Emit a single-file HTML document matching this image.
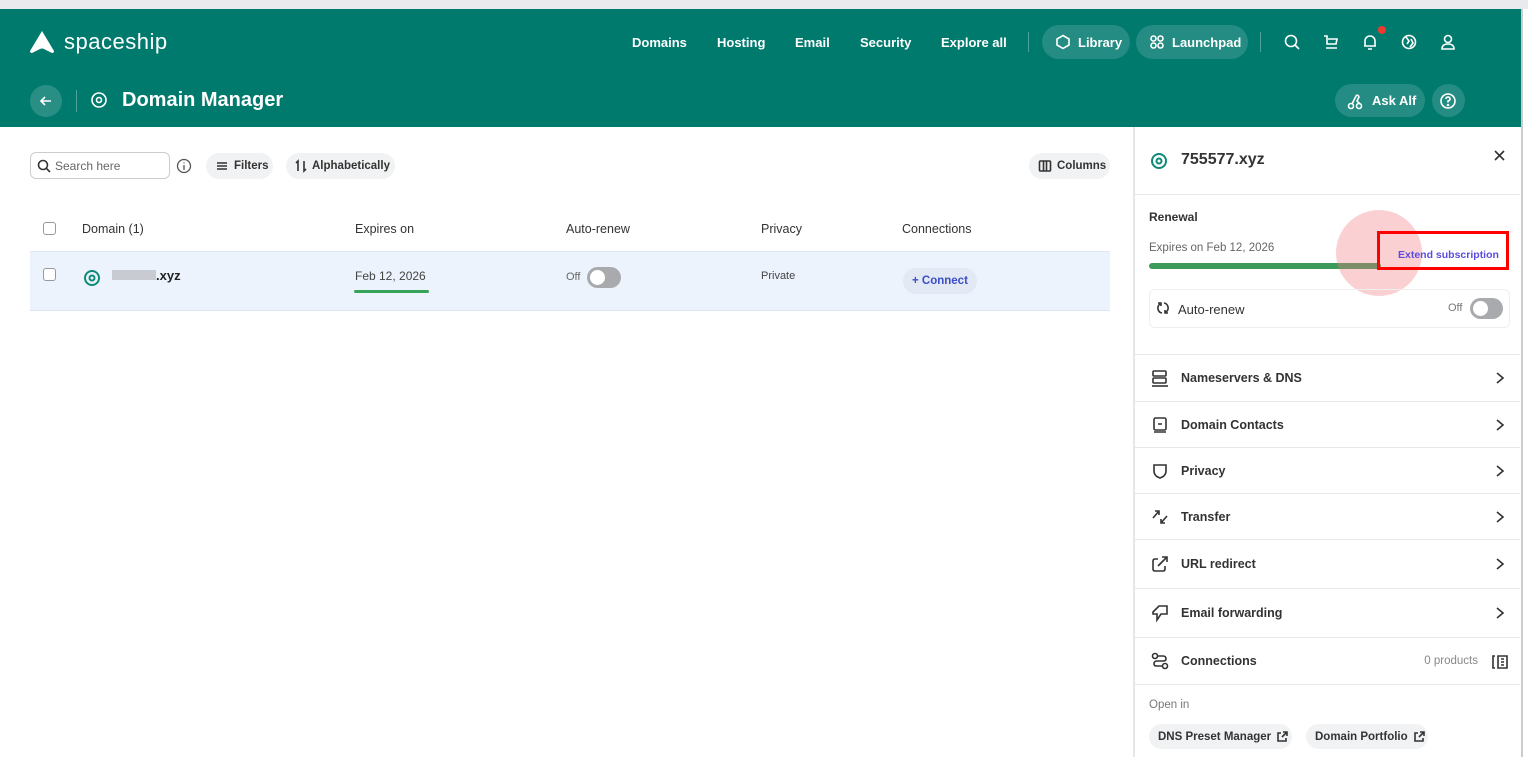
<!DOCTYPE html>
<html><head><meta charset="utf-8"><style>
*{box-sizing:border-box;margin:0;padding:0}
body{width:1528px;height:757px;overflow:hidden;background:#fff;font-family:"Liberation Sans",Arial,sans-serif;color:#222;position:relative}
.abs{position:absolute}
svg{flex-shrink:0;overflow:visible}
.top{left:0;top:0;width:1528px;height:9px;background:#e9eaee}
.hdr{left:0;top:9px;width:1528px;height:118px;background:#017a6e}
.nav{color:#fff;font-weight:bold;font-size:13px;top:35px}
.pill{background:rgba(255,255,255,.14);border-radius:17px;height:34px;top:25px;color:#fff;font-weight:bold;font-size:13px;display:flex;align-items:center;gap:7px;padding:0 13px;white-space:nowrap}
.ic{stroke:#fff;fill:none;stroke-width:1.6}
.btn{background:#f1f2f3;border-radius:13px;height:26px;font-size:11.5px;font-weight:bold;display:flex;align-items:center;gap:5px;padding:0 9px;color:#333;white-space:nowrap}
.th{font-size:12.5px;color:#333;top:222px}
.cb{width:13px;height:13px;border:1px solid #999;border-radius:3px;background:#fff}
.row{left:1135px;width:385px;height:47px;border-top:1px solid #e8e8e8;display:flex;align-items:center;padding-left:16px;font-size:12.5px;font-weight:bold;color:#333}
.row>svg:first-child{margin-right:12px}
.chev{position:absolute;right:14px;top:50%;margin-top:-7px}
.sc{fill:none;stroke:#333;stroke-width:1.6}
</style></head><body>
<div class="abs top"></div>
<div class="abs hdr"></div>
<svg class="abs" style="left:29px;top:30px" width="26" height="24" viewBox="0 0 26 24"><path d="M13 1 L25 21 Q25 23 23 23 L15 19 Q13 18 11 19 L3 23 Q1 23 1 21 Z" fill="#fff"/></svg>
<div class="abs" style="left:64px;top:29px;color:#fff;font-size:22px;letter-spacing:.5px">spaceship</div>
<div class="abs nav" style="left:632px">Domains</div>
<div class="abs nav" style="left:717px">Hosting</div>
<div class="abs nav" style="left:795px">Email</div>
<div class="abs nav" style="left:860px">Security</div>
<div class="abs nav" style="left:941px">Explore all</div>
<div class="abs" style="left:1028px;top:32px;width:1px;height:20px;background:rgba(255,255,255,.3)"></div>
<div class="abs pill" style="left:1042px;width:88px"><svg width="16" height="16" viewBox="0 0 16 16" class="ic"><path d="M8 1.5 L14 5 V11 L8 14.5 L2 11 V5 Z"/></svg>Library</div>
<div class="abs pill" style="left:1136px;width:112px"><svg width="16" height="16" viewBox="0 0 16 16" class="ic"><circle cx="4.5" cy="4.5" r="2.5"/><circle cx="11.5" cy="4.5" r="2.5"/><circle cx="4.5" cy="11.5" r="2.5"/><circle cx="11.5" cy="11.5" r="2.5"/></svg>Launchpad</div>
<div class="abs" style="left:1260px;top:32px;width:1px;height:20px;background:rgba(255,255,255,.3)"></div>
<svg class="abs ic" style="left:1283px;top:33px" width="18" height="18"><circle cx="8" cy="8" r="5.5"/><path d="M12 12 L16 16"/></svg>
<svg class="abs ic" style="left:1322px;top:33px" width="18" height="18"><path d="M2 3 H5 V11 H14 L15 6 H6 M4 15 H15"/></svg>
<svg class="abs ic" style="left:1361px;top:33px" width="18" height="18"><path d="M4 13 V8 A5 5 0 0 1 14 8 V13 H3 H15 M7 16 H11"/></svg>
<div class="abs" style="left:1378px;top:26px;width:8px;height:8px;border-radius:4px;background:#f03a2e"></div>
<svg class="abs ic" style="left:1400px;top:33px" width="18" height="18"><circle cx="9" cy="9" r="6.5"/><path d="M6 4 L9 8 L7 11 M11 6 L13 10 L10 14"/></svg>
<svg class="abs ic" style="left:1439px;top:33px" width="18" height="18"><circle cx="9" cy="6" r="3.5"/><path d="M3 16 Q3 11 9 11 Q15 11 15 16 Z"/></svg>
<div class="abs" style="left:30px;top:85px;width:32px;height:32px;border-radius:16px;background:rgba(255,255,255,.16)"></div>
<svg class="abs ic" style="left:38px;top:93px" width="16" height="16"><path d="M13 8 H3 M7 4 L3 8 L7 12"/></svg>
<div class="abs" style="left:76px;top:90px;width:1px;height:22px;background:rgba(255,255,255,.3)"></div>
<svg class="abs ic" style="left:90px;top:91px" width="18" height="18" stroke-width="2"><circle cx="9" cy="9" r="7"/><circle cx="9" cy="9" r="2.5"/></svg>
<div class="abs" style="left:122px;top:89px;color:#fff;font-size:20px;font-weight:bold">Domain Manager</div>
<div class="abs pill" style="left:1335px;top:84px;width:90px;height:33px;padding:0 12px"><svg width="18" height="18" viewBox="0 0 18 18" class="ic"><circle cx="4" cy="14" r="2.5"/><circle cx="12" cy="14" r="2.5"/><path d="M5 12 L9 4 Q11 2 12 5 L10 9 L13 12"/></svg>Ask Alf</div>
<div class="abs pill" style="left:1432px;top:84px;width:33px;height:33px;padding:0 7px"><svg width="18" height="18" viewBox="0 0 18 18" class="ic"><circle cx="9" cy="9" r="7"/><path d="M7 7 Q7 5 9 5 Q11 5 11 7 Q11 8.5 9 9 V10.5"/><circle cx="9" cy="13" r=".5"/></svg></div>

<!-- left toolbar -->
<div class="abs" style="left:30px;top:152px;width:140px;height:27px;border:1px solid #ccc;border-radius:6px;font-size:12px;color:#666;padding:6px 0 0 24px">Search here</div>
<svg class="abs sc" style="left:37px;top:159px" width="14" height="14" stroke="#555"><circle cx="6" cy="6" r="4.5"/><path d="M9.5 9.5 L13 13"/></svg>
<svg class="abs" style="left:176px;top:158px" width="16" height="16" fill="none" stroke="#555" stroke-width="1.3"><circle cx="8" cy="8" r="6.5"/><path d="M8 7 V12 M8 4.5 V5.5"/></svg>
<div class="abs btn" style="left:206px;top:153px;width:67px"><svg width="14" height="14" class="sc"><path d="M2 4 H12 M2 7 H12 M2 10 H12"/></svg>Filters</div>
<div class="abs btn" style="left:286px;top:153px;width:109px"><svg width="12" height="14" class="sc"><path d="M3 12 V2 L1 4 M9 2 V12 L11 10"/></svg>Alphabetically</div>
<div class="abs btn" style="left:1029px;top:153px;width:81px"><svg width="14" height="14" class="sc"><rect x="1.5" y="2" width="11" height="10" rx="1"/><path d="M5.5 2 V12 M8.5 2 V12"/></svg>Columns</div>

<div class="abs cb" style="left:43px;top:222px"></div>
<div class="abs th" style="left:82px">Domain (1)</div>
<div class="abs th" style="left:355px">Expires on</div>
<div class="abs th" style="left:566px">Auto-renew</div>
<div class="abs th" style="left:761px">Privacy</div>
<div class="abs th" style="left:902px">Connections</div>
<div class="abs" style="left:30px;top:251px;width:1080px;height:60px;background:#ecf3fc;border-top:1px solid #dde6f2;border-bottom:1px solid #dde6f2"></div>
<div class="abs cb" style="left:43px;top:268px"></div>
<svg class="abs" style="left:83px;top:269px" width="18" height="18" fill="none" stroke="#0f8a78" stroke-width="2"><circle cx="9" cy="9" r="7"/><circle cx="9" cy="9" r="2.5"/></svg>
<div class="abs" style="left:112px;top:270px;width:44px;height:10px;background:#c8ccd2"></div>
<div class="abs" style="left:156px;top:268px;font-size:13px;font-weight:bold">.xyz</div>
<div class="abs" style="left:355px;top:269px;font-size:12px;color:#444">Feb 12, 2026</div>
<div class="abs" style="left:354px;top:290px;width:75px;height:3px;background:#35a35a;border-radius:2px"></div>
<div class="abs" style="left:566px;top:271px;font-size:11px;color:#666">Off</div>
<div class="abs" style="left:587px;top:267px;width:34px;height:21px;border-radius:11px;background:#a9aaad"><div style="margin:3px;width:15px;height:15px;border-radius:8px;background:#fff"></div></div>
<div class="abs" style="left:761px;top:270px;font-size:11px;color:#444">Private</div>
<div class="abs btn" style="left:903px;top:268px;color:#3b4dc8;background:#e2e8f4">+ Connect</div>

<!-- right panel -->
<div class="abs" style="left:1133px;top:127px;width:2px;height:630px;background:#e6e6e6"></div>
<div class="abs" style="left:1521px;top:9px;width:7px;height:748px;background:#fff;border-left:2px solid #ccc"></div>
<svg class="abs" style="left:1150px;top:152px" width="18" height="18" fill="none" stroke="#0f8a78" stroke-width="2"><circle cx="9" cy="9" r="7"/><circle cx="9" cy="9" r="2.5"/></svg>
<div class="abs" style="left:1181px;top:151px;font-size:16px;font-weight:bold;color:#333">755577.xyz</div>
<svg class="abs sc" style="left:1494px;top:150px" width="11" height="11"><path d="M1 1 L10 10 M10 1 L1 10"/></svg>
<div class="abs" style="left:1135px;top:194px;width:385px;height:1px;background:#e8e8e8"></div>
<div class="abs" style="left:1149px;top:210px;font-size:12px;font-weight:bold;color:#333">Renewal</div>
<div class="abs" style="left:1149px;top:242px;font-size:11.5px;color:#666">Expires on Feb 12, 2026</div>
<div class="abs" style="left:1149px;top:263px;width:232px;height:6px;border-radius:3px;background:#3c9a5a"></div>
<div class="abs" style="left:1336px;top:210px;width:86px;height:86px;border-radius:43px;background:rgba(240,120,130,.35)"></div>
<div class="abs" style="left:1377px;top:231px;width:132px;height:39px;border:3px solid #f00"></div>
<div class="abs" style="left:1398px;top:249px;font-size:10.5px;font-weight:bold;color:#5a4de0">Extend subscription</div>
<div class="abs" style="left:1149px;top:289px;width:361px;height:39px;border:1px solid #eee;border-radius:6px"></div>
<svg class="abs sc" style="left:1156px;top:301px" width="14" height="14"><path d="M4 3 A5 5 0 0 0 6 12 M10 11 A5 5 0 0 0 8 2 M2 2 H5 V5 M12 12 H9 V9"/></svg>
<div class="abs" style="left:1178px;top:302px;font-size:13px;color:#333">Auto-renew</div>
<div class="abs" style="left:1448px;top:302px;font-size:11px;color:#777">Off</div>
<div class="abs" style="left:1470px;top:298px;width:33px;height:21px;border-radius:11px;background:#a9aaad"><div style="margin:3px;width:15px;height:15px;border-radius:8px;background:#fff"></div></div>

<div class="abs row" style="top:354px"><svg width="18" height="18" class="sc"><rect x="2" y="2" width="13" height="5" rx="1"/><rect x="2" y="9" width="13" height="5" rx="1"/><path d="M1 17 H17"/></svg>Nameservers &amp; DNS<svg class="chev sc" width="12" height="14"><path d="M3 2 L9 7 L3 12"/></svg></div>
<div class="abs row" style="top:401px"><svg width="18" height="18" class="sc"><rect x="3" y="2" width="12" height="12" rx="1.5"/><path d="M3 16 H15 M7 8 H11"/></svg>Domain Contacts<svg class="chev sc" width="12" height="14"><path d="M3 2 L9 7 L3 12"/></svg></div>
<div class="abs row" style="top:447px"><svg width="18" height="18" class="sc"><path d="M3 3 H15 V9 Q15 14 9 16 Q3 14 3 9 Z"/></svg>Privacy<svg class="chev sc" width="12" height="14"><path d="M3 2 L9 7 L3 12"/></svg></div>
<div class="abs row" style="top:493px"><svg width="18" height="18" class="sc"><path d="M2 10 L8 3 M4 3 H8 V7 M16 8 L10 15 M10 11 V15 H14"/></svg>Transfer<svg class="chev sc" width="12" height="14"><path d="M3 2 L9 7 L3 12"/></svg></div>
<div class="abs row" style="top:539px;height:49px"><svg width="18" height="18" class="sc"><path d="M7 4 H4 Q2 4 2 6 V14 Q2 16 4 16 H12 Q14 16 14 14 V11 M7 11 L16 2 M11 2 H16 V7"/></svg>URL redirect<svg class="chev sc" width="12" height="14"><path d="M3 2 L9 7 L3 12"/></svg></div>
<div class="abs row" style="top:588px;height:49px"><svg width="18" height="18" class="sc"><path d="M2 8 L8 2 H16 V10 H10 L6 16 V10 H2 Z"/></svg>Email forwarding<svg class="chev sc" width="12" height="14"><path d="M3 2 L9 7 L3 12"/></svg></div>
<div class="abs row" style="top:637px;height:47px"><svg width="18" height="18" class="sc"><circle cx="4" cy="4" r="2.5"/><circle cx="14" cy="14" r="2.5"/><path d="M6.5 4 H12 Q15 4 15 7 Q15 9 12 9 H6 Q3 9 3 12 Q3 14 6 14 H11.5"/></svg>Connections
<span style="position:absolute;right:42px;font-weight:normal;font-size:11.5px;color:#888">0 products</span><svg class="sc" width="18" height="16" style="position:absolute;right:11px;top:16px"><path d="M4 2 H2 V14 H4 M7 2 H16 V14 H7 Z M10 5 H13 M10 8 H13 M10 11 H13"/></svg></div>
<div class="abs" style="left:1135px;top:684px;width:385px;height:1px;background:#e8e8e8"></div>
<div class="abs" style="left:1149px;top:699px;font-size:11.5px;color:#777">Open in</div>
<div class="abs btn" style="left:1149px;top:724px;height:25px;width:143px">DNS Preset Manager <svg width="12" height="12" class="sc" stroke-width="1.3"><path d="M5 2 H2 V10 H10 V7 M6 6 L11 1 M7 1 H11 V5"/></svg></div>
<div class="abs btn" style="left:1306px;top:724px;height:25px;width:122px">Domain Portfolio <svg width="12" height="12" class="sc" stroke-width="1.3"><path d="M5 2 H2 V10 H10 V7 M6 6 L11 1 M7 1 H11 V5"/></svg></div>
</body></html>
